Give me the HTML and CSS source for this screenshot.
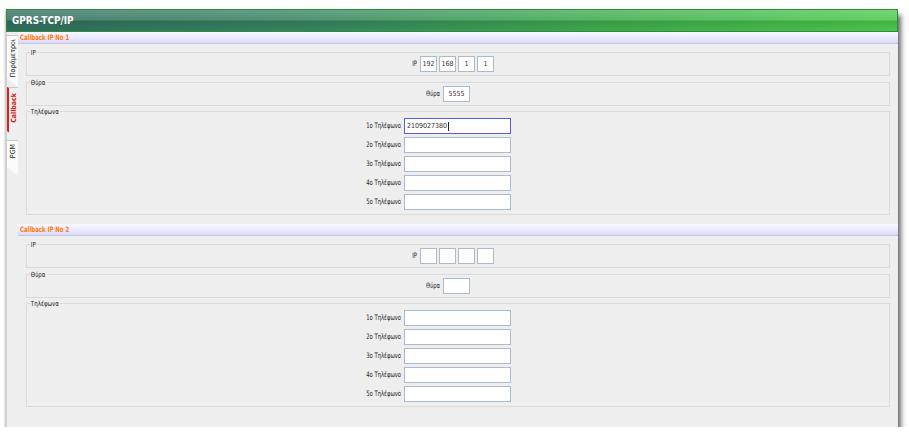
FILE: index.html
```html
<!DOCTYPE html>
<html lang="el">
<head>
<meta charset="utf-8">
<title>GPRS-TCP/IP</title>
<link rel="stylesheet" href="styles.css">
</head>
<body>
<div class="window">
  <div class="titlebar"><span class="title">GPRS-TCP/IP</span></div>
  <div class="main">
    <div class="tabs">
      <div class="tab tab-1"><span class="tab-text">Παράμετροι</span></div>
      <div class="tab tab-2 active"><span class="tab-text">Callback</span></div>
      <div class="tab tab-3"><span class="tab-text">PGM</span></div>
    </div>
    <div class="content">
      <section class="section">
        <div class="sec-head"><span class="sec-title">Callback IP No 1</span></div>
        <div class="box box-ip">
          <span class="legend">IP</span>
          <div class="row row-ip">
            <span class="lbl">IP</span>
            <div class="ip-fields">
              <div class="fld fld-ip">192</div>
              <div class="fld fld-ip">168</div>
              <div class="fld fld-ip">1</div>
              <div class="fld fld-ip">1</div>
            </div>
          </div>
        </div>
        <div class="box box-port">
          <span class="legend">Θύρα</span>
          <div class="row row-port">
            <span class="lbl">Θύρα</span>
            <div class="fld fld-port">5555</div>
          </div>
        </div>
        <div class="box box-phones">
          <span class="legend">Τηλέφωνα</span>
          <div class="phones">
            <div class="row"><span class="lbl">1ο Τηλέφωνο</span><div class="fld fld-phone focused">2109027380<span class="caret"></span></div></div>
            <div class="row"><span class="lbl">2ο Τηλέφωνο</span><div class="fld fld-phone"></div></div>
            <div class="row"><span class="lbl">3ο Τηλέφωνο</span><div class="fld fld-phone"></div></div>
            <div class="row"><span class="lbl">4ο Τηλέφωνο</span><div class="fld fld-phone"></div></div>
            <div class="row"><span class="lbl">5ο Τηλέφωνο</span><div class="fld fld-phone"></div></div>
          </div>
        </div>
      </section>
      <section class="section">
        <div class="sec-head"><span class="sec-title">Callback IP No 2</span></div>
        <div class="box box-ip">
          <span class="legend">IP</span>
          <div class="row row-ip">
            <span class="lbl">IP</span>
            <div class="ip-fields">
              <div class="fld fld-ip"></div>
              <div class="fld fld-ip"></div>
              <div class="fld fld-ip"></div>
              <div class="fld fld-ip"></div>
            </div>
          </div>
        </div>
        <div class="box box-port">
          <span class="legend">Θύρα</span>
          <div class="row row-port">
            <span class="lbl">Θύρα</span>
            <div class="fld fld-port"></div>
          </div>
        </div>
        <div class="box box-phones">
          <span class="legend">Τηλέφωνα</span>
          <div class="phones">
            <div class="row"><span class="lbl">1ο Τηλέφωνο</span><div class="fld fld-phone"></div></div>
            <div class="row"><span class="lbl">2ο Τηλέφωνο</span><div class="fld fld-phone"></div></div>
            <div class="row"><span class="lbl">3ο Τηλέφωνο</span><div class="fld fld-phone"></div></div>
            <div class="row"><span class="lbl">4ο Τηλέφωνο</span><div class="fld fld-phone"></div></div>
            <div class="row"><span class="lbl">5ο Τηλέφωνο</span><div class="fld fld-phone"></div></div>
          </div>
        </div>
      </section>
    </div>
  </div>
</div>
</body>
</html>
```
FILE: styles.css
```css
* { box-sizing: border-box; }

body {
  margin: 0;
  background: #ffffff;
  font-family: "DejaVu Sans Condensed", "DejaVu Sans", sans-serif;
  color: #222;
}

.window {
  margin: 9px 0 0 6px;
  width: 892px;
  height: 418px;
  background: #eeeeee;
  display: flex;
  flex-direction: column;
  box-shadow: 3px 6px 5px rgba(0, 0, 0, 0.6), -1px 1px 2px rgba(0, 0, 0, 0.2);
}

.titlebar {
  height: 23px;
  flex: none;
  border: 1px solid #2f8a3e;
  background:
    linear-gradient(to bottom, rgba(255,255,255,0.22) 0%, rgba(255,255,255,0.12) 48%, rgba(0,0,0,0.12) 52%, rgba(0,0,0,0.02) 100%),
    linear-gradient(to right, #326f5f 0%, #388762 35%, #3eab4e 65%, #4dca4d 100%);
  display: flex;
  align-items: center;
  padding-left: 5px;
}

.title {
  display: block;
  color: #ffffff;
  font-weight: bold;
  font-size: 11px;
  line-height: 12px;
  transform: scaleX(0.9);
  transform-origin: left center;
}

.main {
  flex: 1;
  display: flex;
}

.tabs {
  width: 12px;
  flex: none;
  padding-top: 3px;
  display: flex;
  flex-direction: column;
  border-left: 1px solid #cfcfcf;
}

.tab {
  background: #fbfbfb;
  border-top: 1px solid #c9c9c9;
  display: flex;
  align-items: flex-start;
  justify-content: center;
  clip-path: polygon(0 0, 100% 0, 100% 100%, 0 calc(100% - 9px));
}

.tab-1 { height: 52px; padding-top: 3px; }
.tab-2 { height: 53px; padding-top: 5px; }
.tab-3 { height: 36px; padding-top: 3px; }

.tab.active {
  background: #efefef;
  border-left: 2px solid #d42020;
}

.tab-text {
  writing-mode: vertical-rl;
  transform: rotate(180deg);
  font-size: 7px;
  line-height: 8px;
  color: #222;
}

.tab.active .tab-text {
  color: #c81818;
  font-weight: bold;
}

.content {
  flex: 1;
  display: flex;
  flex-direction: column;
}

.section {
  margin-bottom: 9px;
}

.sec-head {
  height: 12px;
  display: flex;
  align-items: center;
  background: linear-gradient(to bottom, #f8f8ff 0%, #eaeaff 50%, #dadaf8 100%);
  border-bottom: 1px solid #c6c6e2;
  padding-left: 2px;
}

.sec-title {
  display: block;
  color: #ff7a00;
  font-weight: bold;
  font-size: 7.5px;
  line-height: 10px;
  transform: scaleX(0.8);
  transform-origin: left center;
  white-space: nowrap;
}

.box {
  position: relative;
  margin: 0 8px;
  border: 1px solid #dadada;
}

.box-ip { margin-top: 8px; padding: 3px 0 3px; }
.box-port { margin-top: 6px; padding: 3px 0 3px; }
.box-phones { margin-top: 5px; padding: 6px 0 4px; }

.legend {
  position: absolute;
  top: -4px;
  left: 3px;
  padding: 0 1px;
  background: #eeeeee;
  font-size: 7px;
  line-height: 8px;
  color: #222;
  transform: scaleX(0.87);
  transform-origin: left center;
}

.row {
  display: flex;
  align-items: center;
}

.lbl {
  display: block;
  width: 60px;
  margin-right: 3px;
  text-align: right;
  font-size: 7.5px;
  line-height: 8px;
  color: #222;
  white-space: nowrap;
  transform: scaleX(0.78);
  transform-origin: right center;
}

.row-ip { padding-left: 330px; }
.row-port { padding-left: 353px; }

.ip-fields {
  display: flex;
  gap: 2px;
}

.phones {
  padding-left: 314px;
  display: flex;
  flex-direction: column;
  gap: 3px;
}

.fld {
  height: 16px;
  border: 1px solid #a9bbcd;
  background: #ffffff;
  font-size: 7px;
  line-height: 14px;
  color: #333;
  white-space: nowrap;
}

.fld-ip { width: 17px; text-align: center; }
.fld-port { width: 27px; text-align: center; }
.fld-phone { width: 107px; padding-left: 2px; }

.fld.focused {
  border-color: #5b5bea;
}

.caret {
  display: inline-block;
  width: 1px;
  height: 9px;
  background: #222;
  vertical-align: middle;
  margin-left: 1px;
}
```
